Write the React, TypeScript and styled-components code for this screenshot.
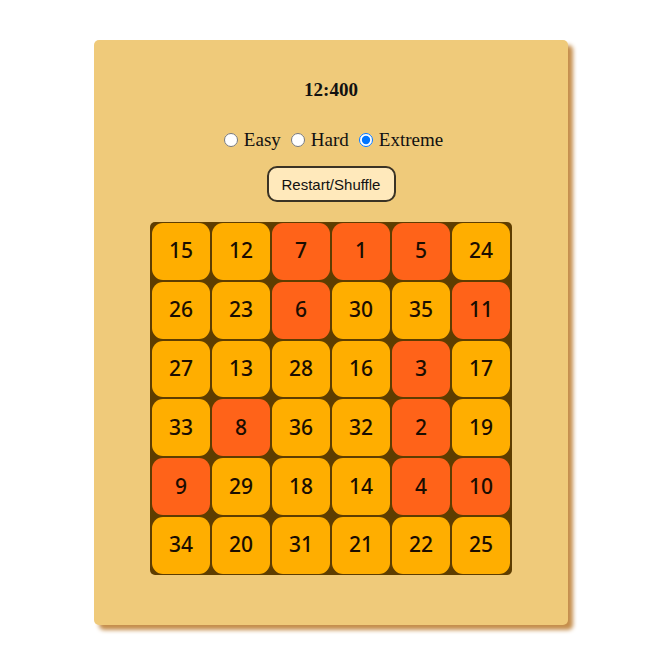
import React, { useState } from "react"
import styled, { createGlobalStyle } from "styled-components"

const GlobalStyle = createGlobalStyle`
    body {
        margin: 0;
        background: #ffffff;
        font-family: "Liberation Serif", "Times New Roman", serif;
    }
`

const Page = styled.div`
    display: flex;
    justify-content: center;
    padding: 40px 0 40px 0;
`

const Card = styled.div`
    width: 474px;
    height: 585px;
    box-sizing: border-box;
    margin-right: 4px;
    background: #efca7a;
    border-radius: 5px;
    box-shadow: 5px 5px 4px #c58e4c;
    display: flex;
    flex-direction: column;
    align-items: center;
    padding-top: 40px;
`

const Timer = styled.div`
    font-size: 19px;
    font-weight: bold;
    line-height: 20px;
    color: #111;
`

const Levels = styled.div`
    display: flex;
    align-items: center;
    margin-top: 29px;
    font-size: 19px;
    color: #111;
`

const Level = styled.label`
    display: flex;
    align-items: center;

    input {
        margin: 0 6px 0 10px;
        width: 14px;
        height: 14px;
    }

    &:first-child input {
        margin-left: 5px;
    }
`

const RestartButton = styled.button`
    margin-top: 15px;
    width: 129px;
    height: 36px;
    font-family: "Liberation Sans", Arial, sans-serif;
    font-size: 15px;
    color: #111;
    background: #ffe9bb;
    border: 2px solid #3a3325;
    border-radius: 10px;
    cursor: pointer;
`

const Board = styled.div`
    margin-top: 20px;
    display: grid;
    grid-template-columns: repeat(6, 58px);
    grid-auto-rows: 56.8px;
    gap: 2px;
    padding: 1px 2px;
    background: #5e3d00;
    border-radius: 5px;
`

const Tile = styled.div<{ $hot: boolean }>`
    display: flex;
    align-items: center;
    justify-content: center;
    border-radius: 11px;
    background: ${(p) => (p.$hot ? "#ff6319" : "#ffae00")};
    font-family: "Noto Sans", "DejaVu Sans", sans-serif;
    font-size: 21px;
    font-weight: 500;
    color: #1a0d00;
    padding-bottom: 2px;
    box-sizing: border-box;
`

const tiles = [
    15, 12, 7, 1, 5, 24,
    26, 23, 6, 30, 35, 11,
    27, 13, 28, 16, 3, 17,
    33, 8, 36, 32, 2, 19,
    9, 29, 18, 14, 4, 10,
    34, 20, 31, 21, 22, 25,
]

// the first eleven numbers are the ones highlighted on the board
const isHot = (value: number) => value <= 11

export default function App() {
    const [level, setLevel] = useState("extreme")

    return (
        <Page>
            <GlobalStyle />
            <Card>
                <Timer>12:400</Timer>
                <Levels>
                    {["Easy", "Hard", "Extreme"].map((name) => (
                        <Level key={name}>
                            <input
                                type="radio"
                                name="level"
                                checked={level === name.toLowerCase()}
                                onChange={() => setLevel(name.toLowerCase())}
                            />
                            {name}
                        </Level>
                    ))}
                </Levels>
                <RestartButton>Restart/Shuffle</RestartButton>
                <Board>
                    {tiles.map((value) => (
                        <Tile key={value} $hot={isHot(value)}>
                            {value}
                        </Tile>
                    ))}
                </Board>
            </Card>
        </Page>
    )
}
